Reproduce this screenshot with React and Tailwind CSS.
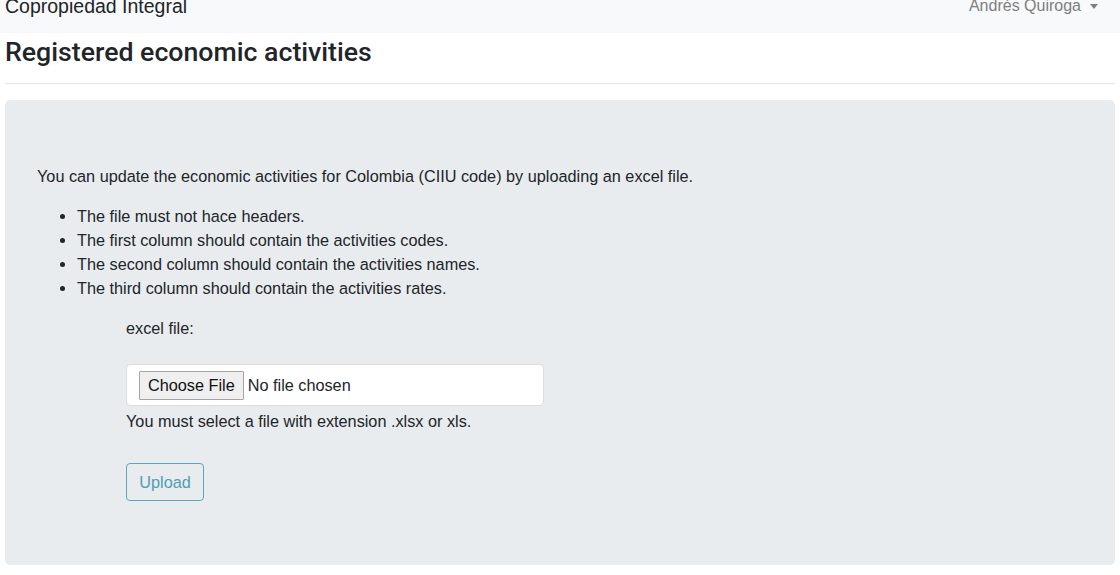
export default function App() {
  return (
    <div
      className="min-h-screen bg-white text-[#212529]"
      style={{ fontFamily: '"Liberation Sans", Arial, sans-serif' }}
    >
      {/* Navbar */}
      <nav className="h-[33px] bg-[#f8f9fa] overflow-hidden">
        <div className="flex items-center justify-between pl-[5px] pr-[22px] mt-[-9px]">
          <span className="text-[19.5px] leading-[30px]">Copropiedad Integral</span>
          <span className="flex items-center text-[16px] leading-[30px] text-[#7d7f81]">
            Andrés Quiroga
            <span className="ml-[9px] w-0 h-0 border-l-[4px] border-r-[4px] border-t-[5px] border-l-transparent border-r-transparent border-t-[#7d7f81]" />
          </span>
        </div>
      </nav>

      <main className="px-[5px]">
        <h2
          className="text-[26.7px] leading-[34px] font-medium pt-[2px] pb-[14px] border-b border-[#e5e6e8]"
          style={{ fontFamily: "Roboto, Arial, sans-serif" }}
        >
          Registered economic activities
        </h2>

        <div className="mt-4 mb-[10px] rounded-[5px] bg-[#e9ecef] px-8 pt-16 pb-16 text-[16.25px] leading-6">
          <p className="mb-4">
            You can update the economic activities for Colombia (CIIU code) by
            uploading an excel file.
          </p>
          <ul className="list-disc pl-10 mb-4">
            <li>The file must not hace headers.</li>
            <li>The first column should contain the activities codes.</li>
            <li>The second column should contain the activities names.</li>
            <li>The third column should contain the activities rates.</li>
          </ul>

          <div className="pl-[89px]">
            <label className="block mb-6">excel file:</label>
            <div className="w-[418px] h-[42px] bg-white border border-[#dadde0] rounded-[4px] flex items-center pl-[12px]">
              <span className="h-[29px] px-[8px] flex items-center border border-[#a5a5a5] bg-[#efefef] text-[#111] rounded-[1px]">
                Choose File
              </span>
              <span className="ml-[4px]">No file chosen</span>
            </div>
            <p className="mt-[3px]">You must select a file with extension .xlsx or xls.</p>
            <button className="mt-[30px] h-[38px] w-[78px] border border-[#5ea6b8] rounded-[4px] text-[#4f9db1] leading-6">
              Upload
            </button>
          </div>
        </div>
      </main>
    </div>
  );
}
